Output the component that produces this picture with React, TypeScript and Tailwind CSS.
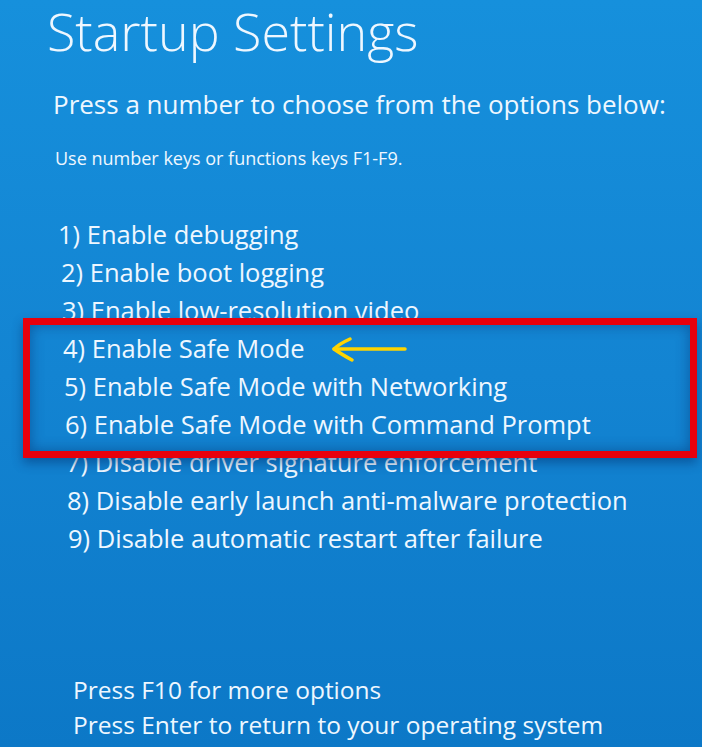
const options = [
  { text: "1) Enable debugging", indent: "pl-[58px]" },
  { text: "2) Enable boot logging", indent: "pl-[61px]" },
  { text: "3) Enable low-resolution video", indent: "pl-[62px]" },
  { text: "4) Enable Safe Mode", indent: "pl-[63px]" },
  { text: "5) Enable Safe Mode with Networking", indent: "pl-[64px]" },
  { text: "6) Enable Safe Mode with Command Prompt", indent: "pl-[65px]" },
  { text: "7) Disable driver signature enforcement", indent: "pl-[66px]" },
  { text: "8) Disable early launch anti-malware protection", indent: "pl-[67px]" },
  { text: "9) Disable automatic restart after failure", indent: "pl-[68px]" },
];

export default function App() {
  return (
    <div className="relative w-[702px] h-[747px] overflow-hidden bg-linear-to-b from-[#1690dc] via-[#1384d2] to-[#0c78c7] text-[#eef7ff] font-['Open_Sans',sans-serif]">
      <h1 className="pl-[47px] -mt-[4px] text-[52px] leading-[70px] font-light whitespace-nowrap">
        Startup Settings
      </h1>

      <p className="mt-[23px] pl-[53px] text-[26px] leading-[30px] whitespace-nowrap">
        Press a number to choose from the options below:
      </p>
      <p className="mt-[29px] pl-[55px] text-[18px] leading-[20px] whitespace-nowrap">
        Use number keys or functions keys F1-F9.
      </p>

      {/* option list, each line drifts right a bit (photo perspective) */}
      <ul className="mt-[47px]">
        {options.map((o) => (
          <li
            key={o.text}
            className={`${o.indent} text-[25.5px] leading-[38px] whitespace-nowrap`}
          >
            {o.text}
          </li>
        ))}
      </ul>

      <div className="mt-[115px] pl-[73px] text-[24.5px] leading-[35px] whitespace-nowrap">
        <p>Press F10 for more options</p>
        <p>Press Enter to return to your operating system</p>
      </div>

      {/* annotation: red highlight box */}
      <div className="absolute left-[23px] top-[318px] w-[674px] h-[140px] border-[7px] border-[#e8000c] shadow-[inset_0_0_14px_rgba(0,40,100,0.45),0_5px_10px_rgba(0,40,100,0.45)]" />

      {/* annotation: yellow arrow */}
      <svg
        className="absolute left-[329px] top-[334px]"
        width="80"
        height="30"
        viewBox="0 0 80 30"
        fill="none"
        stroke="#ffd400"
        strokeWidth="3.5"
        strokeLinecap="round"
        strokeLinejoin="round"
      >
        <path d="M5 15 L76 15" />
        <path d="M21 5 Q10 10 5 15 Q12 20 23 26" />
      </svg>
    </div>
  );
}
